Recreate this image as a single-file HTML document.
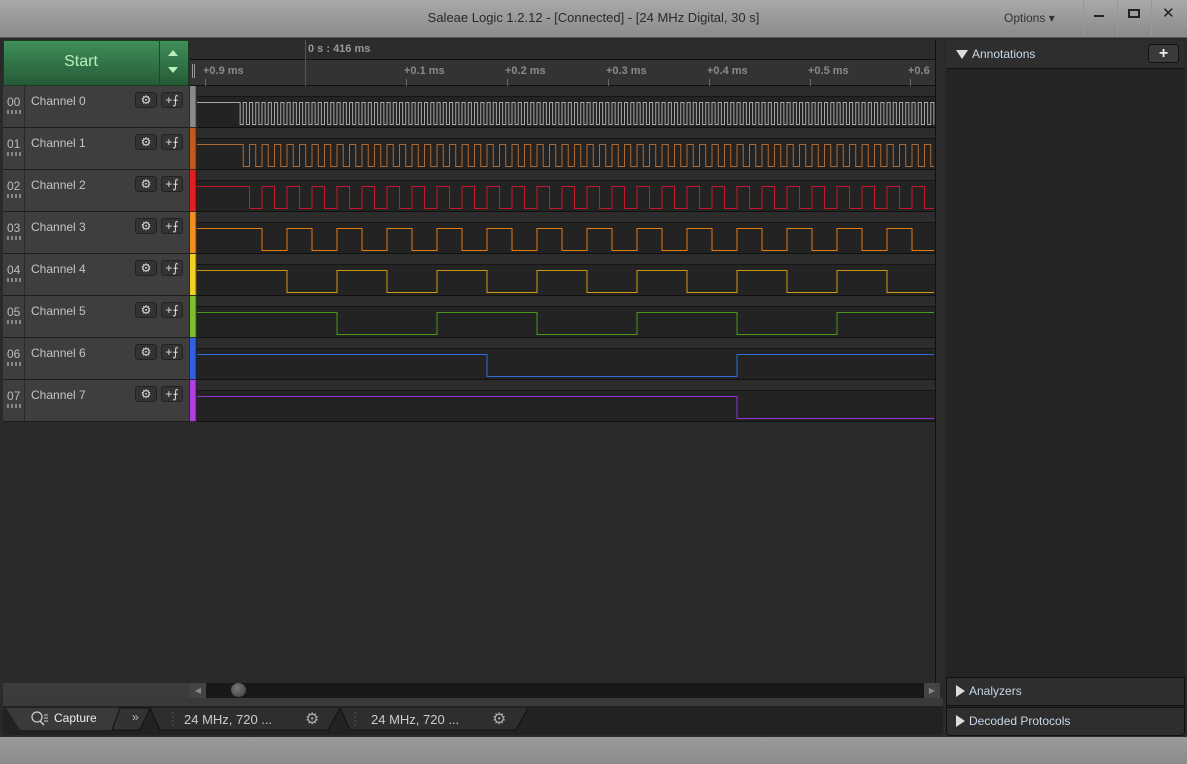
<!DOCTYPE html>
<html><head><meta charset="utf-8"><style>
*{box-sizing:border-box;margin:0;padding:0}
body{width:1187px;height:764px;overflow:hidden;background:#2a2a2a;font-family:"Liberation Sans",sans-serif;position:relative}
.abs{position:absolute}
#title{left:0;top:0;width:1187px;height:38px;background:linear-gradient(#a9a9a9,#8a8a8a);border-bottom:1px solid #5a5a5a}
#title .t{left:0;width:1187px;top:10px;text-align:center;font-size:13px;color:#2a2a2a}
#status{left:0;top:737px;width:1187px;height:27px;background:linear-gradient(#9a9a9a,#8c8c8c)}
.row{position:absolute;left:3px;width:186px;height:42px;background:#3e3e3e;border-bottom:1px solid #1e1e1e}
.row .num{position:absolute;left:0;top:0;width:22px;height:41px;border-right:1px solid #2a2a2a;color:#bbb;font-size:12px;padding:9px 0 0 4px}
.row .dots{position:absolute;left:4px;top:24px;width:14px;height:4px;border-top:2px dotted #888;border-bottom:2px dotted #888}
.row .name{position:absolute;left:28px;top:8px;font-size:12px;color:#c4c4c4}
.btn{position:absolute;top:6px;width:22px;height:16px;border:1px solid #222;border-radius:3px;background:#333;color:#ddd;font-size:12px;text-align:center;line-height:14px}
.wrow{position:absolute;left:197px;width:738px;height:42px;background:#232323;border-bottom:1px solid #111}
.wrow:before{content:"";position:absolute;left:0;top:0;width:100%;height:10px;background:#2c2c2c;border-bottom:1px solid #151515}
.stripe{position:absolute;left:190px;width:7px;height:41px}
.tab{font-size:12px;color:#ccc}
</style></head><body>
<div id="title" class="abs"><div class="t abs">Saleae Logic 1.2.12 - [Connected] - [24 MHz Digital, 30 s]</div>
<div class="abs" style="left:1004px;top:11px;font-size:12px;color:#333">Options ▾</div>
<div class="abs" style="left:1083px;top:0;width:1px;height:36px;background:#999"></div>
<div class="abs" style="left:1117px;top:0;width:1px;height:36px;background:#999"></div>
<div class="abs" style="left:1151px;top:0;width:1px;height:36px;background:#999"></div>
<div class="abs" style="left:1094px;top:15px;width:10px;height:2px;background:#222"></div>
<div class="abs" style="left:1128px;top:9px;width:12px;height:9px;border:2px solid #222"></div>
<div class="abs" style="left:1162px;top:4px;font-size:15px;color:#222">✕</div>
</div>

<div class="abs" style="left:3px;top:40px;width:186px;height:46px;background:linear-gradient(#3f8f5a,#265a37);border:1px solid #1a3a24"></div>
<div class="abs" style="left:3px;top:53px;width:156px;text-align:center;font-size:16px;color:#b8f0b8">Start</div>
<div class="abs" style="left:159px;top:40px;width:1px;height:46px;background:#1d4a2c"></div>
<div class="abs" style="left:168px;top:50px;width:0;height:0;border-left:5px solid transparent;border-right:5px solid transparent;border-bottom:6px solid #b8f0b8"></div>
<div class="abs" style="left:168px;top:67px;width:0;height:0;border-left:5px solid transparent;border-right:5px solid transparent;border-top:6px solid #b8f0b8"></div>

<div id="rows"></div>

<div class="abs" style="left:190px;top:40px;width:745px;height:20px;background:#2c2c2c;border-bottom:1px solid #111"></div>
<div class="abs" style="left:190px;top:60px;width:745px;height:26px;background:#333;border-bottom:1px solid #111"></div>
<div class="abs" style="left:305px;top:40px;width:1px;height:46px;background:#555"></div>
<div class="abs" style="left:308px;top:43px;font-size:11px;font-weight:bold;color:#999">0 s : 416 ms</div>
<div class="abs" style="left:192px;top:64px;width:3px;height:14px;border-left:1px solid #999;border-right:1px solid #999"></div>
<div class="abs" style="left:936px;top:64px;width:3px;height:14px;border-left:1px solid #999;border-right:1px solid #999"></div>
<div id="ticks"></div>
<div class="abs" style="left:935px;top:40px;width:8px;height:643px;background:#2c2c2c;border-left:1px solid #111"></div>

<svg class="abs" style="left:0;top:0" width="1187" height="764" id="wf"></svg>

<div class="abs" style="left:3px;top:683px;width:187px;height:15px;background:#3c3c3c"></div>
<div class="abs" style="left:190px;top:683px;width:16px;height:15px;background:#444;color:#888;font-size:8px;line-height:15px;text-align:center">◀</div>
<div class="abs" style="left:206px;top:683px;width:718px;height:15px;background:#181818"></div>
<div class="abs" style="left:924px;top:683px;width:16px;height:15px;background:#444;color:#888;font-size:8px;line-height:15px;text-align:center">▶</div>
<div class="abs" style="left:231px;top:683px;width:15px;height:14px;border-radius:50%;background:radial-gradient(circle at 40% 35%,#777,#3a3a3a)"></div>
<div class="abs" style="left:3px;top:698px;width:940px;height:8px;background:#3a3a3a"></div>
<div class="abs" style="left:3px;top:706px;width:940px;height:29px;background:#222;border-radius:0 0 4px 4px"></div>
<svg class="abs" style="left:0;top:700px" width="560" height="40">
<path d="M6 8 L20 30 L124 30 L132 8 Z" fill="#3a3a3a"/>
<path d="M112 30 L120 8 L150 8 L140 30 Z" fill="#333" stroke="#111"/>
<path d="M150 8 L160 30 L328 30 L340 8" fill="#2e2e2e" stroke="#111"/>
<path d="M340 8 L350 30 L516 30 L528 8" fill="#2e2e2e" stroke="#111"/>
<line x1="173" y1="12" x2="173" y2="28" stroke="#555" stroke-dasharray="2 2"/>
<line x1="355" y1="12" x2="355" y2="28" stroke="#555" stroke-dasharray="2 2"/>
<circle cx="37" cy="17" r="5" fill="none" stroke="#ccc" stroke-width="1.3"/><line x1="40" y1="21" x2="44" y2="25" stroke="#ccc" stroke-width="1.5"/>
<path d="M44 15h4M44 18h4M44 21h4" stroke="#ccc"/>
</svg>
<div class="abs tab" style="left:54px;top:711px;color:#eee">Capture</div>
<div class="abs tab" style="left:132px;top:710px;color:#bbb">»</div>
<div class="abs tab" style="left:184px;top:712px;font-size:13px">24 MHz, 720 ...</div>
<div class="abs tab" style="left:371px;top:712px;font-size:13px">24 MHz, 720 ...</div>
<div class="abs" style="left:305px;top:709px;font-size:16px;color:#aaa">⚙</div>
<div class="abs" style="left:492px;top:709px;font-size:16px;color:#aaa">⚙</div>

<div class="abs" style="left:946px;top:40px;width:239px;height:696px;background:#242424;border-radius:4px"></div>
<div class="abs" style="left:946px;top:40px;width:239px;height:29px;background:#2e2e2e;border-bottom:1px solid #111;border-radius:4px 4px 0 0"></div>
<div class="abs" style="left:956px;top:50px;width:0;height:0;border-left:6px solid transparent;border-right:6px solid transparent;border-top:9px solid #ddd"></div>
<div class="abs" style="left:972px;top:47px;font-size:12px;color:#c8d8e8">Annotations</div>
<div class="abs" style="left:1148px;top:44px;width:31px;height:19px;border:1px solid #111;border-radius:3px;background:#3a3a3a;color:#eee;font-weight:bold;font-size:16px;text-align:center;line-height:17px">+</div>
<div class="abs" style="left:946px;top:677px;width:239px;height:29px;background:#2e2e2e;border:1px solid #111"></div>
<div class="abs" style="left:946px;top:707px;width:239px;height:29px;background:#2e2e2e;border:1px solid #111;border-radius:0 0 4px 4px"></div>
<div class="abs" style="left:956px;top:685px;width:0;height:0;border-top:6px solid transparent;border-bottom:6px solid transparent;border-left:9px solid #ddd"></div>
<div class="abs" style="left:969px;top:684px;font-size:12px;color:#c8d8e8">Analyzers</div>
<div class="abs" style="left:956px;top:715px;width:0;height:0;border-top:6px solid transparent;border-bottom:6px solid transparent;border-left:9px solid #ddd"></div>
<div class="abs" style="left:969px;top:714px;font-size:12px;color:#c8d8e8">Decoded Protocols</div>

<div id="status" class="abs"></div>

<script>
var cols=[["#8a8a8a","#a8a8a8"],["#c05a1c","#b06a30"],["#e02020","#c8162a"],["#f09020","#e07b10"],["#f0d020","#d09a10"],["#80c030","#4a9a1a"],["#3060e0","#2a6fd0"],["#b040e0","#9a30d8"]];
var halves=[3.125,6.25,12.5,25,50,100,250,500];
var rows="",svg="",tks="";
for(var i=0;i<8;i++){
 var t=86+42*i;
 rows+='<div class="row" style="top:'+t+'px"><div class="num">0'+i+'</div><div class="dots"></div><div class="name">Channel '+i+'</div><div class="btn" style="left:132px">⚙</div><div class="btn" style="left:158px">+⨍</div></div>';
 rows+='<div class="stripe" style="top:'+t+'px;background:linear-gradient(90deg,'+cols[i][0]+','+cols[i][0]+' 70%,#111)"></div>';
 rows+='<div class="wrow" style="top:'+t+'px"></div>';
 var hi=t+16.5,lo=t+38.5,half=halves[i];
 var d="M197 "+hi,y=hi,x=237+half;
 while(x<934){d+=" H"+x.toFixed(2);y=(y==hi)?lo:hi;d+=" V"+y;x+=half;}
 d+=" H934";
 svg+='<path d="'+d+'" fill="none" stroke="'+cols[i][1]+'" stroke-width="1"/>';
}
var tk=[[203,"+0.9 ms"],[404,"+0.1 ms"],[505,"+0.2 ms"],[606,"+0.3 ms"],[707,"+0.4 ms"],[808,"+0.5 ms"],[908,"+0.6"]];
tk.forEach(function(a){tks+='<div class="abs" style="left:'+a[0]+'px;top:65px;font-size:11px;font-weight:bold;color:#8a8a8a">'+a[1]+'</div>';
 svg+='<line x1="'+(a[0]+2.5)+'" y1="79" x2="'+(a[0]+2.5)+'" y2="86" stroke="#666"/>';});
document.getElementById("rows").innerHTML=rows;
document.getElementById("ticks").innerHTML=tks;
document.getElementById("wf").innerHTML=svg;
</script>
</body></html>
